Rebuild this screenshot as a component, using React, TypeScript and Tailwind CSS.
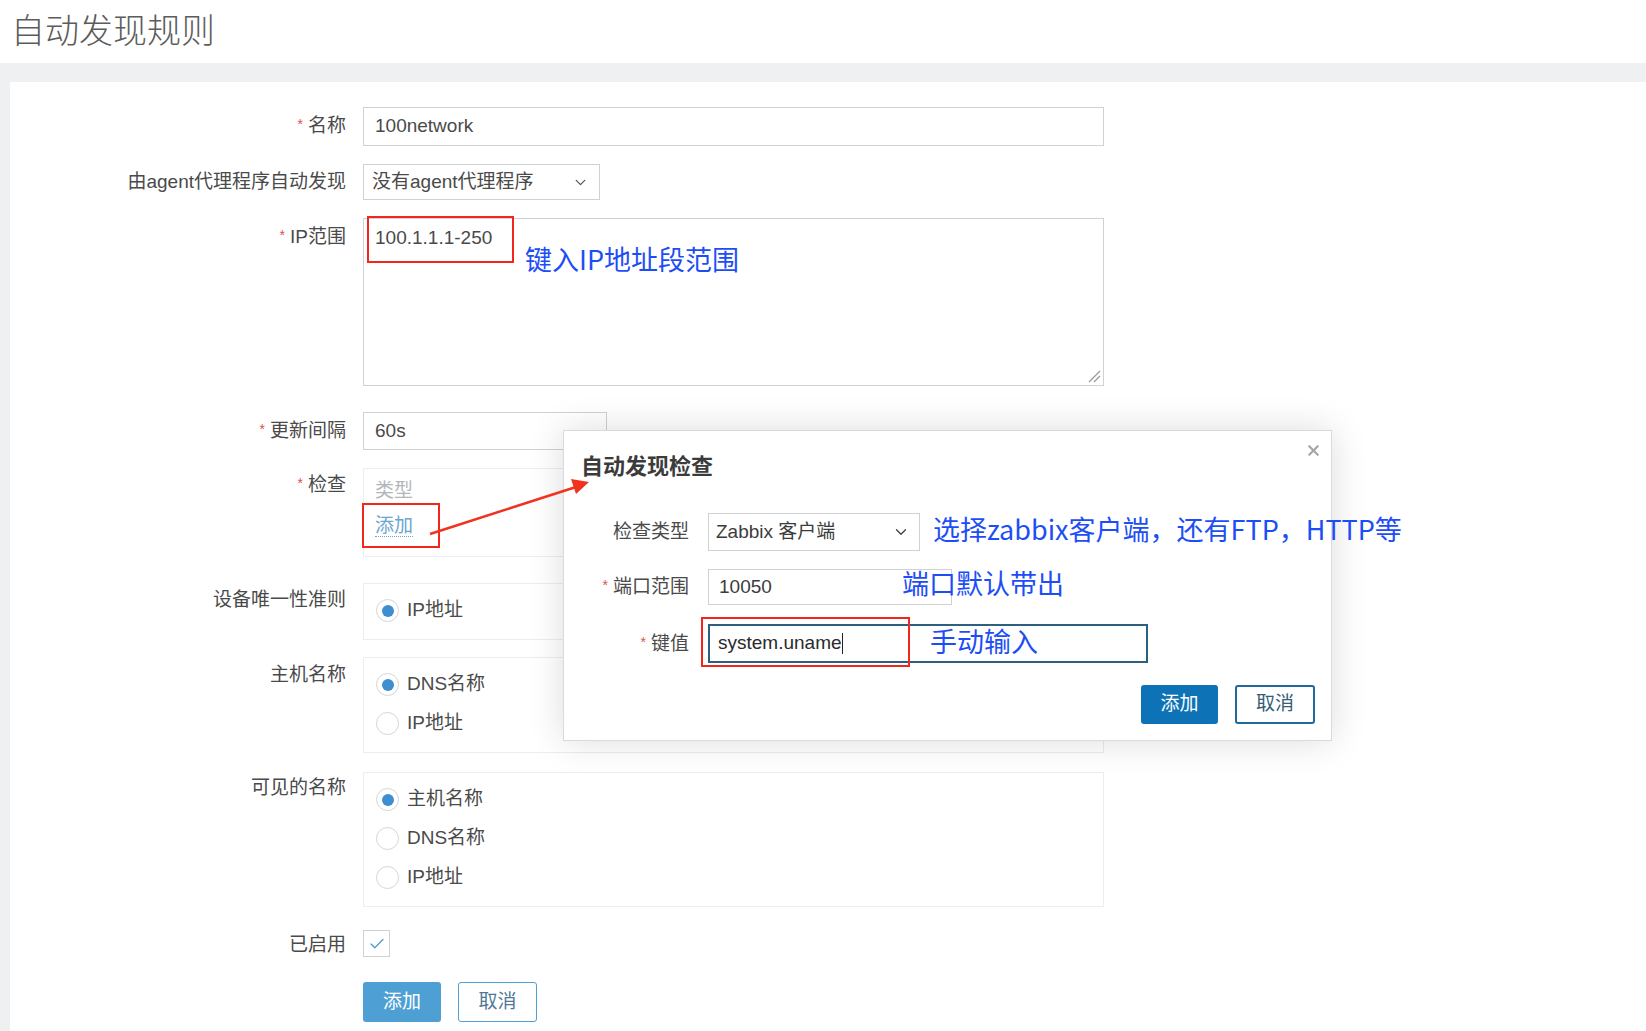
import React from 'react';
import { ChevronDown, X, Check } from 'lucide-react';

const redBox = 'absolute border-2 border-[#f3261c] pointer-events-none';
const note = "absolute whitespace-nowrap text-[27px] leading-none text-[#1d4ef5] font-['Noto_Sans_CJK_SC',sans-serif]";

function Star() {
  return <span className="text-[#d9534f] text-[14px] mr-[5px] relative -top-[3px]">*</span>;
}

function Row({ label, required, className, labelPt = 'pt-[8px]', children }: {
  label: string;
  required?: boolean;
  className?: string;
  labelPt?: string;
  children: React.ReactNode;
}) {
  return (
    <div className={`flex ${className || ''}`}>
      <div className={`w-[336px] text-right leading-[22px] text-[19px] text-[#4a4a4a] ${labelPt}`}>
        {required && <Star />}
        {label}
      </div>
      <div className="ml-[17px]">{children}</div>
    </div>
  );
}

function Radio({ checked, label }: { checked?: boolean; label: string }) {
  return (
    <div className="flex items-center h-[39px]">
      <span className="w-[23px] h-[23px] rounded-full border border-[#d3d6d9] bg-white flex items-center justify-center">
        {checked && <span className="w-[12px] h-[12px] rounded-full bg-[#3d8fd1]" />}
      </span>
      <span className="ml-[8px] text-[19px] text-[#4a4a4a]">{label}</span>
    </div>
  );
}

function Box({ className, children }: { className?: string; children: React.ReactNode }) {
  return (
    <div className={`w-[741px] border border-[#ebedef] pl-[12px] pt-[7px] pb-[9px] ${className || ''}`}>
      {children}
    </div>
  );
}

export default function App() {
  return (
    <div className="relative w-[1646px] h-[1031px] overflow-hidden bg-[#eef0f2] font-['Liberation_Sans','Noto_Sans_CJK_SC',sans-serif]">
      {/* header */}
      <div className="h-[63px] bg-white flex items-center pl-[11px]">
        <h1 className="text-[34px] leading-none text-[#5c5c5c] font-['Noto_Sans_CJK_SC',sans-serif] font-light -mt-[6px]">
          自动发现规则
        </h1>
      </div>

      <div className="pt-[19px] pl-[10px]">
        <div className="bg-white h-[949px] pt-[25px]">
          <Row label="名称" required>
            <div className="w-[741px] h-[39px] border border-[#cfd2d5] flex items-center pl-[11px] text-[19px] text-[#4a4a4a]">
              100network
            </div>
          </Row>

          <Row label="由agent代理程序自动发现" className="mt-[18px]" labelPt="pt-[7px]">
            <div className="w-[237px] h-[36px] border border-[#cfd2d5] flex items-center justify-between pl-[8px] pr-[10px] text-[19px] text-[#4a4a4a]">
              没有agent代理程序
              <ChevronDown size={17} strokeWidth={1.8} className="text-[#555]" />
            </div>
          </Row>

          <Row label="IP范围" required className="mt-[18px]">
            <div className="relative w-[741px] h-[168px] border border-[#cfd2d5] pl-[11px] pt-[7px] text-[19px] leading-[24px] text-[#4a4a4a]">
              100.1.1.1-250
              <svg className="absolute right-[2px] bottom-[2px]" width="14" height="14" viewBox="0 0 14 14">
                <path d="M2 13 L13 2 M7 13 L13 7" stroke="#999" strokeWidth="1.3" />
              </svg>
            </div>
          </Row>

          <Row label="更新间隔" required className="mt-[26px]">
            <div className="w-[244px] h-[38px] border border-[#cfd2d5] flex items-center pl-[11px] text-[19px] text-[#4a4a4a]">
              60s
            </div>
          </Row>

          <Row label="检查" required className="mt-[18px]" labelPt="pt-[6px]">
            <div className="w-[741px] h-[89px] border border-[#ebedef] pl-[11px] pt-[10px]">
              <div className="text-[19px] leading-[24px] text-[#b3b6b9]">类型</div>
              <div className="mt-[11px] text-[19px] leading-[24px] text-[#6ba6cf]">
                <span className="border-b border-dotted border-[#6ba6cf]">添加</span>
              </div>
            </div>
          </Row>

          <Row label="设备唯一性准则" className="mt-[26px]" labelPt="pt-[6px]">
            <Box>
              <Radio checked label="IP地址" />
            </Box>
          </Row>

          <Row label="主机名称" className="mt-[17px]" labelPt="pt-[7px]">
            <Box>
              <Radio checked label="DNS名称" />
              <Radio label="IP地址" />
            </Box>
          </Row>

          <Row label="可见的名称" className="mt-[19px]" labelPt="pt-[5px]">
            <Box className="pt-[6px]">
              <Radio checked label="主机名称" />
              <Radio label="DNS名称" />
              <Radio label="IP地址" />
            </Box>
          </Row>

          <Row label="已启用" className="mt-[23px]" labelPt="pt-[4px]">
            <div className="w-[27px] h-[27px] border border-[#cfd2d5] flex items-center justify-center">
              <Check size={18} strokeWidth={1.6} className="text-[#4a97cf]" />
            </div>
          </Row>

          <div className="flex ml-[353px] mt-[25px] gap-[17px]">
            <button className="w-[78px] h-[40px] rounded-[3px] bg-[#4e9fd4] text-white text-[19px]">添加</button>
            <button className="w-[79px] h-[40px] rounded-[3px] border border-[#4e9fd4] bg-white text-[#4f7896] text-[19px]">取消</button>
          </div>
        </div>
      </div>

      {/* dialog */}
      <div className="absolute left-[563px] top-[430px] w-[769px] h-[311px] bg-white border border-[#d8dbde] shadow-[0_0_34px_rgba(0,0,0,0.14)]">
        <X size={17} strokeWidth={3} className="absolute right-[9px] top-[11px] text-[#a3a6a9]" />
        <div className="pl-[17px] pt-[20px] leading-[26px] text-[22px] font-bold text-[#3b3b3b] font-['Noto_Sans_CJK_SC',sans-serif]">
          自动发现检查
        </div>

        <div className="mt-[36px] flex flex-col gap-[18px]">
          <div className="flex">
            <div className="w-[125px] text-right text-[19px] leading-[38px] text-[#4a4a4a]">检查类型</div>
            <div className="ml-[19px] w-[212px] h-[38px] border border-[#cfd2d5] flex items-center justify-between pl-[7px] pr-[9px] text-[19px] text-[#3c3c3c]">
              Zabbix 客户端
              <ChevronDown size={18} strokeWidth={1.8} className="text-[#444]" />
            </div>
          </div>
          <div className="flex">
            <div className="w-[125px] text-right text-[19px] leading-[36px] text-[#4a4a4a]"><Star />端口范围</div>
            <div className="ml-[19px] w-[244px] h-[36px] border border-[#cfd2d5] flex items-center pl-[10px] text-[19px] text-[#3c3c3c]">
              10050
            </div>
          </div>
          <div className="flex">
            <div className="w-[125px] text-right text-[19px] leading-[39px] text-[#4a4a4a]"><Star />键值</div>
            <div className="ml-[19px] w-[440px] h-[39px] border-2 border-[#2c5f80] flex items-center pl-[8px] text-[19px] text-[#2a2a2a]">
              system.uname
              <span className="w-[1px] h-[21px] bg-[#222]" />
            </div>
          </div>
        </div>

        <div className="absolute right-[16px] bottom-[16px] flex gap-[17px]">
          <button className="w-[77px] h-[39px] rounded-[3px] bg-[#0e73b6] text-white text-[19px]">添加</button>
          <button className="w-[80px] h-[39px] rounded-[3px] border-2 border-[#1f6a9a] bg-white text-[#355d78] text-[19px]">取消</button>
        </div>
      </div>

      {/* annotations */}
      <div className={`${redBox} left-[367px] top-[216px] w-[147px] h-[47px]`} />
      <div className={`${redBox} left-[362px] top-[503px] w-[78px] h-[45px]`} />
      <div className={`${redBox} left-[701px] top-[617px] w-[209px] h-[50px]`} />

      <svg className="absolute left-0 top-0 pointer-events-none" width="1646" height="1031">
        <line x1="430" y1="534" x2="576" y2="487" stroke="#f0321e" strokeWidth="2.5" />
        <polygon points="589,482 571,479 576,494" fill="#f0321e" />
      </svg>

      <div className={`${note} left-[525px] top-[245px]`}>键入IP地址段范围</div>
      <div className={`${note} left-[933px] top-[515px]`}>选择zabbix客户端，还有FTP，HTTP等</div>
      <div className={`${note} left-[902px] top-[569px]`}>端口默认带出</div>
      <div className={`${note} left-[930px] top-[627px]`}>手动输入</div>
    </div>
  );
}
